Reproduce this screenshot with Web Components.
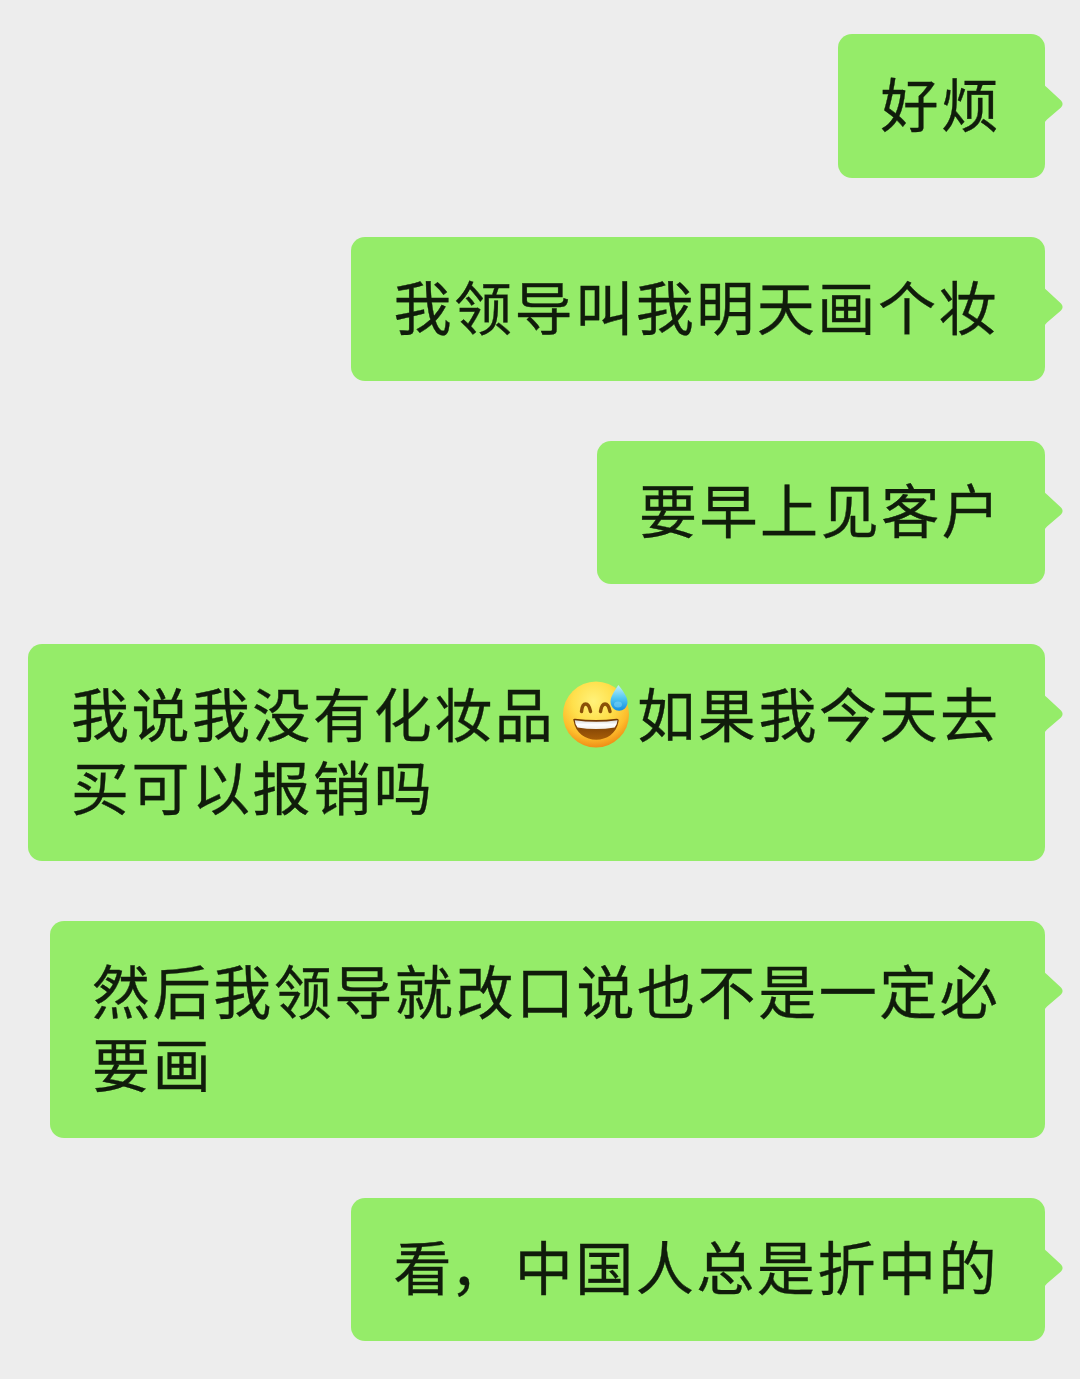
<!DOCTYPE html>
<html lang="zh-CN">
<head>
<meta charset="utf-8">
<title>聊天</title>
<style>
html,body{margin:0;background:#ededed}
.comma{margin:0 4px 0 -4px}
</style>
</head>
<body>
<chat-thread>
<chat-bubble style="--w:207px">好烦</chat-bubble>
<chat-bubble style="--w:694px">我领导叫我明天画个妆</chat-bubble>
<chat-bubble style="--w:448.5px">要早上见客户</chat-bubble>
<chat-bubble style="--w:1016.6px">我说我没有化妆品<sweat-smile></sweat-smile>如果我今天去<br>买可以报销吗</chat-bubble>
<chat-bubble style="--w:995.4px">然后我领导就改口说也不是一定必<br>要画</chat-bubble>
<chat-bubble style="--w:694px">看<span class="comma">，</span>中国人总是折中的</chat-bubble>
</chat-thread>
<script>
class ChatThread extends HTMLElement{
  constructor(){
    super();
    this.attachShadow({mode:'open'}).innerHTML=`
<style>
:host{display:flex;flex-direction:column;align-items:flex-end;gap:59.9px;box-sizing:border-box;width:1080px;height:1379px;padding:34px 17px 0 0;overflow:hidden;background:#ededed}
</style><slot></slot>`;
  }
}
class ChatBubble extends HTMLElement{
  constructor(){
    super();
    this.attachShadow({mode:'open'}).innerHTML=`
<style>
:host{display:flex;align-items:flex-start;flex:none}
.body{box-sizing:border-box;width:var(--w);padding:35.5px 0 34.5px 42.5px;border-radius:14px;background:#95ec69;color:#101c0b;font:400 58px/73.5px "Liberation Sans","Noto Sans CJK SC",sans-serif;letter-spacing:2.55px;white-space:nowrap;text-spacing-trim:space-all;-webkit-text-stroke:.35px #101c0b}
svg{display:block;flex:none;margin:50px 0 0 -1px}
</style>
<div class="body"><slot></slot></div>
<svg width="19" height="40" viewBox="0 0 19 40"><path d="M0 0 Q1 2 3 3.5 L17 16.5 Q20.2 20 17 23.5 L3 35.5 Q1 37 0 40Z" fill="#95ec69"/></svg>`;
  }
}
class SweatSmile extends HTMLElement{
  constructor(){
    super();
    this.attachShadow({mode:'open'}).innerHTML=`
<style>
:host{display:inline-block;width:82px;height:68px;vertical-align:-11px;line-height:0;letter-spacing:0}
svg{display:block;margin-left:7px}
</style>
<svg width="68" height="68" viewBox="0 0 68 68" role="img" aria-label="😅">
<defs>
<radialGradient id="f" cx=".46" cy=".3" r=".7"><stop offset="0" stop-color="#fff27a"/><stop offset=".45" stop-color="#ffe04c"/><stop offset=".78" stop-color="#fdbd2c"/><stop offset="1" stop-color="#ef8e16"/></radialGradient>
<linearGradient id="m" x1="0" y1="0" x2="0" y2="1"><stop offset="0" stop-color="#6c3504"/><stop offset="1" stop-color="#a85e08"/></linearGradient>
<linearGradient id="d" x1="0" y1="0" x2="0" y2="1"><stop offset="0" stop-color="#c4f0fb"/><stop offset=".5" stop-color="#55c8f4"/><stop offset="1" stop-color="#138edf"/></linearGradient>
<linearGradient id="t" x1="0" y1="0" x2="0" y2="1"><stop offset="0" stop-color="#d9d8d6"/><stop offset=".5" stop-color="#fff"/><stop offset="1" stop-color="#f2eee7"/></linearGradient>
</defs>
<circle cx="34" cy="34.5" r="33" fill="url(#f)"/>
<g fill="none" stroke="#8a5108" stroke-width="3.5" stroke-linecap="round"><path d="M19.5 31.500 C20.5 21.5 26.5 21.5 28.5 31.500"/><path d="M38.500 31.500 C40 21.500 46 21.500 48 31.500"/></g>
<path d="M11.500 40.500 Q10.500 38.500 13 38.700 Q34 41.500 54.500 38.700 Q57.300 38.500 56.500 41.500 C52.500 66 15.500 66 11.500 40.500Z" fill="url(#m)"/>
<path d="M12.800 40.200 Q34 43.200 55.500 40.200 Q55.300 44.500 52.700 47.500 Q34 50.500 15.500 47.500 Q13 44.500 12.800 40.200Z" fill="url(#t)"/>
<path d="M56.300 5 C52.500 11 48.500 16.500 48.500 22 C49.500 33.500 64.500 33.500 65.500 22.500 C66 17 60 9.500 56.300 5Z" fill="url(#d)"/>
<ellipse cx="56" cy="24.500" rx="4" ry="3" fill="#88dcfa" opacity=".5"/>
</svg>`;
  }
}
customElements.define('chat-thread',ChatThread);
customElements.define('chat-bubble',ChatBubble);
customElements.define('sweat-smile',SweatSmile);
</script>
</body>
</html>
